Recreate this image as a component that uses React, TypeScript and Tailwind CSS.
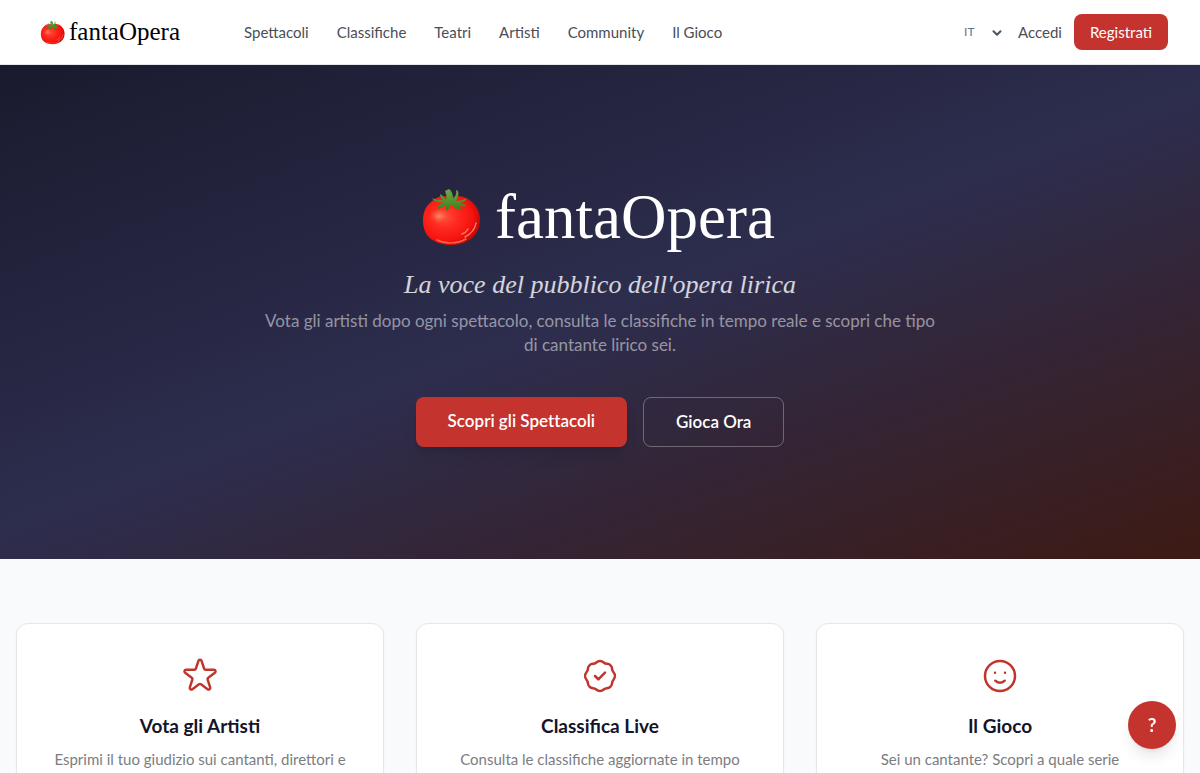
import { FC } from 'react';
import { ChevronDown } from 'lucide-react';

const navLinks = [
    'Spettacoli',
    'Classifiche',
    'Teatri',
    'Artisti',
    'Community',
    'Il Gioco',
];

const features = [
    {
        title: 'Vota gli Artisti',
        text: 'Esprimi il tuo giudizio sui cantanti, direttori e',
        icon: 'M11.049 2.927c.3-.921 1.603-.921 1.902 0l1.519 4.674a1 1 0 00.95.69h4.915c.969 0 1.371 1.24.588 1.81l-3.976 2.888a1 1 0 00-.363 1.118l1.518 4.674c.3.922-.755 1.688-1.538 1.118l-3.976-2.888a1 1 0 00-1.176 0l-3.976 2.888c-.783.57-1.838-.197-1.538-1.118l1.518-4.674a1 1 0 00-.363-1.118l-3.976-2.888c-.784-.57-.38-1.81.588-1.81h4.914a1 1 0 00.951-.69l1.519-4.674z',
    },
    {
        title: 'Classifica Live',
        text: 'Consulta le classifiche aggiornate in tempo',
        icon: 'M9 12l2 2 4-4M7.835 4.697a3.42 3.42 0 001.946-.806 3.42 3.42 0 014.438 0 3.42 3.42 0 001.946.806 3.42 3.42 0 013.138 3.138 3.42 3.42 0 00.806 1.946 3.42 3.42 0 010 4.438 3.42 3.42 0 00-.806 1.946 3.42 3.42 0 01-3.138 3.138 3.42 3.42 0 00-1.946.806 3.42 3.42 0 01-4.438 0 3.42 3.42 0 00-1.946-.806 3.42 3.42 0 01-3.138-3.138 3.42 3.42 0 00-.806-1.946 3.42 3.42 0 010-4.438 3.42 3.42 0 00.806-1.946 3.42 3.42 0 013.138-3.138z',
    },
    {
        title: 'Il Gioco',
        text: 'Sei un cantante? Scopri a quale serie',
        icon: 'M14.828 14.828a4 4 0 01-5.656 0M9 10h.01M15 10h.01M21 12a9 9 0 11-18 0 9 9 0 0118 0z',
    },
];

const Tomato: FC<{ id: string; className: string }> = ({ id, className }) => {
    return (
        <svg viewBox="0 0 60 60" className={className} aria-hidden="true">
            <defs>
                <radialGradient id={`${id}-body`} cx="0.38" cy="0.42" r="0.66">
                    <stop offset="0" stopColor="#ff5038" />
                    <stop offset="0.35" stopColor="#ff2a20" />
                    <stop offset="0.75" stopColor="#f5120f" />
                    <stop offset="1" stopColor="#b80805" />
                </radialGradient>
                <radialGradient id={`${id}-shine`}>
                    <stop offset="0" stopColor="#ffa080" stopOpacity="0.8" />
                    <stop offset="1" stopColor="#ff5038" stopOpacity="0" />
                </radialGradient>
                <linearGradient id={`${id}-leaf`} x1="0" y1="0" x2="0" y2="1">
                    <stop offset="0" stopColor="#74a843" />
                    <stop offset="1" stopColor="#35801d" />
                </linearGradient>
            </defs>
            <path
                d="M30 11c7-3 15-2 21 4 6 5 8 12 8 18 0 15-12 25-29 25S2 49 2 34c0-8 2-14 8-19 6-6 13-7 20-4z"
                fill={`url(#${id}-body)`}
            />
            <ellipse
                cx="18"
                cy="29"
                rx="10"
                ry="8"
                fill={`url(#${id}-shine)`}
            />
            <path
                d="M16 53c8 4 20 4 29-1"
                fill="none"
                stroke="#ff6246"
                strokeWidth="1.5"
                strokeLinecap="round"
            />
            <path
                d="M41 47c3-1 5-3 6-5M44 50c6-3 10-8 11-14"
                fill="none"
                stroke="#ff7a60"
                strokeWidth="1.5"
                strokeLinecap="round"
            />
            {/* stalk and sepals */}
            <path
                d="M24 4l4-2c3 2 4 6 4 10 2-2 4-5 3-9l2 1c1 4 0 7-2 10 4 0 7-1 11-3-2 4-5 5-9 5 4 0 7 1 9 3-4 1-7 0-10-1 3 1 4 3 4 5-4 0-6-2-8-4l-3-1c0 2-1 4-3 6-2-2-2-4-1-7-2 3-5 4-9 5 1-4 4-5 7-7-5 1-10 0-12-4 4 2 7 2 11 2-2-2-3-4-3-6 2 1 4 3 6 6 1-3 0-6-1-9z"
                fill={`url(#${id}-leaf)`}
            />
        </svg>
    );
};

const Header: FC = () => {
    return (
        <header className="bg-white border-b border-gray-200">
            <div className="flex items-center justify-between h-16 pl-10 pr-8">
                <div className="flex items-center gap-16">
                    <a
                        href="#"
                        className="flex items-center gap-1 font-[Liberation_Serif,serif] text-[25px] leading-8 text-black"
                    >
                        <Tomato id="nav" className="w-[25px] h-[25px]" />
                        fantaOpera
                    </a>
                    <nav className="flex items-center gap-7 text-[15px] leading-5 text-[#4a4d57]">
                        {navLinks.map((link) => (
                            <a key={link} href="#">
                                {link}
                            </a>
                        ))}
                    </nav>
                </div>

                <div className="flex items-center gap-3 text-[15px] leading-5">
                    <div className="relative">
                        <select
                            aria-label="Lingua"
                            className="appearance-none block w-[42px] text-xs text-gray-500 bg-transparent"
                        >
                            <option>IT</option>
                        </select>
                        <ChevronDown
                            className="absolute right-0.5 top-0.5 w-3.5 h-3.5 text-gray-600 pointer-events-none"
                            strokeWidth={3.5}
                        />
                    </div>
                    <a href="#" className="text-[#4a4d57]">
                        Accedi
                    </a>
                    <a
                        href="#"
                        className="px-4 py-2 rounded-lg bg-[#c4332d] text-white"
                    >
                        Registrati
                    </a>
                </div>
            </div>
        </header>
    );
};

const Hero: FC = () => {
    return (
        <section className="px-4 py-28 text-center bg-[linear-gradient(160deg,#1a1a2e_0%,#2d2d4e_50%,#3d1a14_100%)]">
            <h1 className="flex items-center justify-center gap-3.5 pr-1 font-[Liberation_Serif,serif] text-[63px] leading-[80px] text-white">
                <Tomato id="hero" className="w-[60px] h-[60px]" />
                fantaOpera
            </h1>
            <p className="mt-3 font-[Liberation_Serif,serif] italic text-[26px] leading-8 text-white/80">
                La voce del pubblico dell'opera lirica
            </p>
            <p className="mt-2 mx-auto max-w-2xl text-[17px] leading-6 text-white/50">
                Vota gli artisti dopo ogni spettacolo, consulta le classifiche
                in tempo reale e scopri che tipo di cantante lirico sei.
            </p>
            <div className="mt-10 flex justify-center gap-4 text-[17px] leading-6 font-semibold text-white [font-variant-ligatures:none]">
                <a
                    href="#"
                    className="px-8 py-3 rounded-lg bg-[#c4332d] shadow-lg"
                >
                    Scopri gli Spettacoli
                </a>
                <a
                    href="#"
                    className="px-8 py-3 rounded-lg border border-white/30"
                >
                    Gioca Ora
                </a>
            </div>
        </section>
    );
};

const Features: FC = () => {
    return (
        <section className="px-4 py-16">
            <div className="grid grid-cols-3 gap-8">
                {features.map((feature) => (
                    <div
                        key={feature.title}
                        className="p-8 text-center bg-white border border-gray-200 rounded-xl shadow-xs"
                    >
                        <svg
                            viewBox="0 0 24 24"
                            fill="none"
                            stroke="currentColor"
                            strokeWidth={1.5}
                            strokeLinecap="round"
                            strokeLinejoin="round"
                            className="w-10 h-10 mx-auto text-[#c0362d]"
                            aria-hidden="true"
                        >
                            <path d={feature.icon} />
                        </svg>
                        <h2 className="mt-4 text-[19px] leading-7 font-bold text-[#14142a]">
                            {feature.title}
                        </h2>
                        <p className="mt-2 text-[15px] leading-[22px] text-[#7b7d82]">
                            {feature.text}
                        </p>
                    </div>
                ))}
            </div>
        </section>
    );
};

const App: FC = () => {
    return (
        <div className="min-h-screen bg-[#f9fafc] font-[Lato,sans-serif]">
            <Header />
            <main>
                <Hero />
                <Features />
            </main>
            <button
                type="button"
                aria-label="Aiuto"
                className="fixed bottom-6 right-6 w-12 h-12 rounded-full bg-[#c4332d] text-white text-[19px] font-bold shadow-lg"
            >
                ?
            </button>
        </div>
    );
};

export default App;
